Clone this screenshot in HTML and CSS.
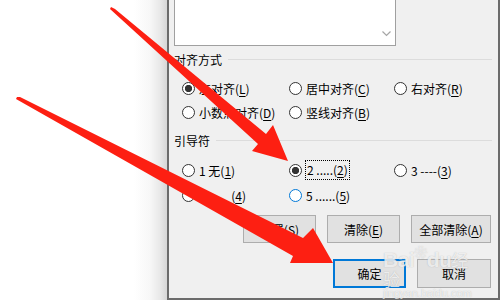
FILE: index.html
```html
<!DOCTYPE html>
<html lang="zh-CN">
<head>
<meta charset="utf-8">
<title>制表位</title>
<link rel="stylesheet" href="styles.css">
</head>
<body>
<div class="page">
  <div class="backdrop"></div>
  <div class="dialog">
    <div class="listbox">
      <div class="scroll">
        <svg class="chev" width="9" height="6" viewBox="0 0 9 6"><path d="M0.5 0.5 L4.5 4.5 L8.5 0.5" fill="none" stroke="#a6a6a6" stroke-width="1.2"/></svg>
      </div>
    </div>

    <div class="legend legend-align"><span class="legend-text">对齐方式</span><span class="rule"></span></div>
    <div class="grid grid-align">
      <div class="opt"><span class="radio checked"></span><span>左对齐(<u>L</u>)</span></div>
      <div class="opt"><span class="radio"></span><span>居中对齐(<u>C</u>)</span></div>
      <div class="opt"><span class="radio"></span><span>右对齐(<u>R</u>)</span></div>
      <div class="opt"><span class="radio"></span><span>小数点对齐(<u>D</u>)</span></div>
      <div class="opt"><span class="radio"></span><span>竖线对齐(<u>B</u>)</span></div>
    </div>

    <div class="legend legend-leader"><span class="legend-text">引导符</span><span class="rule"></span></div>
    <div class="grid grid-leader">
      <div class="opt"><span class="radio"></span><span>1 无(<u>1</u>)</span></div>
      <div class="opt"><span class="radio checked"></span><span class="focus">2 .....(<u>2</u>)</span></div>
      <div class="opt"><span class="radio"></span><span>3 ----(<u>3</u>)</span></div>
      <div class="opt row2"><span class="radio"></span><span>4 ___ (<u>4</u>)</span></div>
      <div class="opt row2"><span class="radio hover"></span><span>5 ......(<u>5</u>)</span></div>
    </div>

    <div class="buttons buttons-top">
      <div class="btn">设置(<u>S</u>)</div>
      <div class="btn">清除(<u>E</u>)</div>
      <div class="btn wide">全部清除(<u>A</u>)</div>
    </div>
    <div class="buttons buttons-bottom">
      <div class="btn default">确定</div>
      <div class="btn cancel">取消</div>
    </div>

    <div class="watermark">
      <span class="wm-logo">Bai<span class="paw">❀</span>du</span><span class="wm-cn">经验</span>
      <span class="wm-url">jingyan.baidu.com</span>
    </div>
  </div>

  <svg class="arrows" width="500" height="300" viewBox="0 0 500 300">
    <polygon fill="#fd1f12" points="111,7 115,9 266,134 273,125 288,161 252,151 258,144 110,9"/>
    <polygon fill="#fd1f12" points="17,97 20,97 303,238 313,228 333,263 290,263 293,256 16,99"/>
  </svg>
</div>
</body>
</html>
```

FILE: styles.css
```css
* { box-sizing: border-box; }
html, body { margin: 0; padding: 0; background: #fff; }
body {
  font-family: "Noto Sans CJK SC", "Noto Sans", "DejaVu Sans", sans-serif;
  font-size: 12px;
  color: #000;
}
.page {
  position: relative;
  width: 500px;
  height: 300px;
  overflow: hidden;
  display: flex;
}
.backdrop {
  width: 167px;
  flex: none;
  background: linear-gradient(to right, #fff 0, #fff 134px, #f7f7f7 150px, #e8e8e8 160px, #d6d6d6 167px);
}
.dialog {
  position: relative;
  width: 333px;
  height: 300px;
  flex: none;
  background: #f0f0f0;
  border-left: 2px solid #6b6b6b;
  border-right: 2px solid #6b6b6b;
  border-bottom: 2px solid #6b6b6b;
  padding: 0 6px 0 5px;
  display: flex;
  flex-direction: column;
}
.listbox {
  width: 222px;
  height: 46px;
  flex: none;
  background: #fff;
  border: 1px solid #a0a0a0;
  border-top: none;
  display: flex;
  justify-content: flex-end;
}
.scroll {
  width: 17px;
  height: 100%;
  display: flex;
  align-items: flex-end;
  justify-content: center;
  padding-bottom: 8px;
}
.legend {
  height: 20px;
  display: flex;
  align-items: center;
  gap: 6px;
  flex: none;
}
.legend-align { margin-top: 4px; }
.legend-leader { margin-top: 9px; }
.legend-text { line-height: 20px; padding-left: 0; }
.rule {
  flex: 1;
  height: 1px;
  background: #dcdcdc;
  margin-top: -2px;
}
.grid {
  display: grid;
  grid-template-columns: 107px 105px 1fr;
  padding-left: 8px;
  flex: none;
}
.grid-align { margin-top: 8px; row-gap: 4px; }
.grid-leader { margin-top: 9px; row-gap: 5px; }
.opt {
  height: 20px;
  display: flex;
  align-items: center;
  gap: 4px;
  white-space: nowrap;
}
.radio {
  width: 13px;
  height: 13px;
  flex: none;
  border: 1px solid #333;
  border-radius: 50%;
  background: #fff;
}
.radio.checked {
  background: radial-gradient(circle, #333 0, #333 3.3px, #fff 4px);
}
.radio.hover { border-color: #0078d7; }
.focus {
  outline: 1px dotted #000;
  outline-offset: 0;
  padding: 0 1px;
  line-height: 18px;
}
u { text-underline-offset: 2px; }
.buttons {
  display: flex;
  justify-content: flex-end;
  gap: 11px;
  flex: none;
}
.buttons-top { margin-top: 10px; padding-right: 1px; }
.buttons-bottom { margin-top: 16px; padding-right: 1px; }
.btn {
  width: 73px;
  height: 28px;
  border: 1px solid #adadad;
  background: #e1e1e1;
  display: flex;
  align-items: center;
  justify-content: center;
}
.btn.wide { width: 80px; }
.btn.default {
  height: 29px;
  border: 2px solid #0078d7;
}
.btn.cancel { width: 74px; height: 29px; }
.watermark {
  position: absolute;
  left: 214px;
  top: 246px;
  width: 90px;
  color: rgba(255, 255, 255, 0.75);
  text-shadow: 0 0 1px rgba(120, 120, 120, 0.5);
  font-family: "Liberation Sans", "Noto Sans CJK SC", sans-serif;
  line-height: 1;
}
.wm-logo { font-size: 21px; font-weight: bold; letter-spacing: -0.5px; }
.paw { font-size: 13px; vertical-align: 10px; }
.wm-cn { font-size: 17px; font-family: "Noto Sans CJK SC", sans-serif; }
.wm-url { display: block; font-size: 11px; margin-top: 0; }
.arrows {
  position: absolute;
  left: 0;
  top: 0;
  pointer-events: none;
}
```
